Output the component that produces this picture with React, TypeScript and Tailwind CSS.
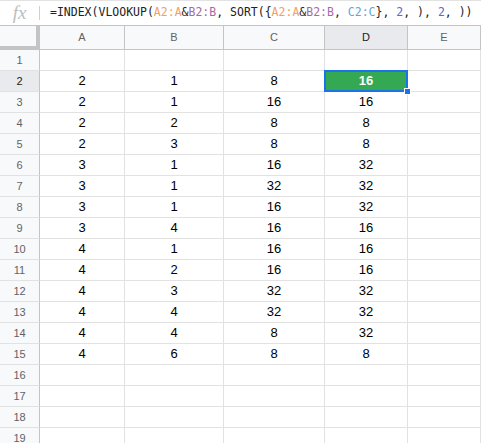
import React from "react";

const cols = ["A", "B", "C", "D", "E"];

const rows: (number | null)[][] = [
  [null, null, null, null],
  [2, 1, 8, 16],
  [2, 1, 16, 16],
  [2, 2, 8, 8],
  [2, 3, 8, 8],
  [3, 1, 16, 32],
  [3, 1, 32, 32],
  [3, 1, 16, 32],
  [3, 4, 16, 16],
  [4, 1, 16, 16],
  [4, 2, 16, 16],
  [4, 3, 32, 32],
  [4, 4, 32, 32],
  [4, 4, 8, 32],
  [4, 6, 8, 8],
  [null, null, null, null],
  [null, null, null, null],
  [null, null, null, null],
  [null, null, null, null],
];

function FormulaBar() {
  return (
    <div className="flex items-center h-[26px] border-t border-b border-t-[#e3e3e3] border-b-[#c4c4c4] bg-white">
      <div className="w-[39px] flex items-center justify-center text-[#bdbdbd] italic text-[19px] leading-none pb-[2px]" style={{ fontFamily: '"Liberation Serif", serif' }}>
        fx
      </div>
      <div className="w-px h-[14px] bg-[#d0d0d0]" />
      <div className="pl-[10px] whitespace-nowrap text-[11.5px] text-[#222]" style={{ fontFamily: '"DejaVu Sans Mono", monospace' }}>
        =INDEX(VLOOKUP(<span className="text-[#f2a064]">A2:A</span>&amp;<span className="text-[#a46aa8]">B2:B</span>, SORT({"{"}
        <span className="text-[#f2a064]">A2:A</span>&amp;<span className="text-[#a46aa8]">B2:B</span>, <span className="text-[#5ea6d8]">C2:C</span>
        {"}"}, <span className="text-[#6466c8]">2</span>, ), <span className="text-[#6466c8]">2</span>, ))
      </div>
    </div>
  );
}

export default function App() {
  return (
    <div className="w-[481px] h-[443px] overflow-hidden bg-white" style={{ fontFamily: '"Liberation Sans", Arial, sans-serif' }}>
      <FormulaBar />
      <div className="grid grid-cols-[40px_85px_99px_101px_83px_1fr]">
        <div className="h-[24px] bg-[#f8f9fa] border-r-4 border-b-4 border-[#c4c4c4]" />
        {cols.map((c) => (
          <div
            key={c}
            className={`h-[24px] flex items-center justify-center text-[11px] border-r border-b border-[#c4c4c4] ${
              c === "D" ? "bg-[#e8eaed] text-[#202124]" : "bg-[#f8f9fa] text-[#5f6368]"
            }`}
          >
            {c}
          </div>
        ))}
        {rows.map((r, i) => (
          <React.Fragment key={i}>
            <div
              className={`h-[21px] flex items-center justify-center text-[11px] border-r border-b border-r-[#c4c4c4] border-b-[#e2e2e2] ${
                i === 1 ? "bg-[#e8eaed] text-[#202124]" : "bg-[#f8f9fa] text-[#5f6368]"
              }`}
            >
              {i + 1}
            </div>
            {[0, 1, 2, 3, 4].map((j) => {
              const v = j < 4 ? r[j] : null;
              if (i === 1 && j === 3) {
                return (
                  <div key={j} className="relative h-[21px] border-r border-b border-[#e2e2e2]">
                    <div className="absolute -left-px -top-px -right-px -bottom-px border-2 border-[#1a73e8] bg-[#34a853] flex items-center justify-center text-white font-bold text-[13px]">
                      {v}
                    </div>
                    <div className="absolute -right-[4px] -bottom-[4px] w-[7px] h-[7px] bg-[#1a73e8] border border-white" />
                  </div>
                );
              }
              return (
                <div key={j} className="h-[21px] flex items-center justify-center text-[13px] text-black border-r border-b border-[#e2e2e2]">
                  {v}
                </div>
              );
            })}
          </React.Fragment>
        ))}
      </div>
    </div>
  );
}
